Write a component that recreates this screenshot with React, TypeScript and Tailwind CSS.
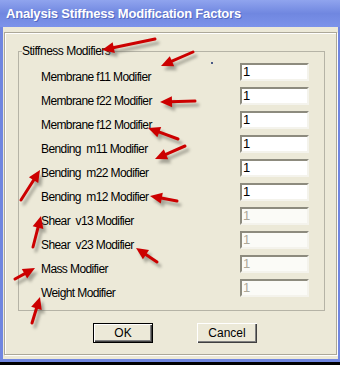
const rows = [
  { label: "Membrane f11 Modifier", enabled: true },
  { label: "Membrane f22 Modifier", enabled: true },
  { label: "Membrane f12 Modifier", enabled: true },
  { label: "Bending  m11 Modifier", enabled: true },
  { label: "Bending  m22 Modifier", enabled: true },
  { label: "Bending  m12 Modifier", enabled: true },
  { label: "Shear  v13 Modifier", enabled: false },
  { label: "Shear  v23 Modifier", enabled: false },
  { label: "Mass Modifier", enabled: false },
  { label: "Weight Modifier", enabled: false },
];

// red annotation arrows: tip first, then tail
const arrows: [number, number, number, number][] = [
  [102, 50, 155, 39],
  [161, 66, 193, 52],
  [160, 102, 195, 101],
  [148, 128, 178, 139],
  [155, 159, 185, 146],
  [40, 170, 21, 200],
  [150, 196, 177, 201],
  [41, 216, 33, 247],
  [136, 248, 157, 262],
  [35, 268, 15, 279],
  [40, 297, 32, 323],
];

function Arrow({ tip, tail, fill }: { tip: [number, number]; tail: [number, number]; fill: string }) {
  const [x1, y1] = tip;
  const [x2, y2] = tail;
  const len = Math.hypot(x2 - x1, y2 - y1);
  const ux = (x2 - x1) / len;
  const uy = (y2 - y1) / len;
  const head = 12;
  const half = 5.5;
  const bx = x1 + ux * head;
  const by = y1 + uy * head;
  const pts = `${x1},${y1} ${bx - uy * half},${by + ux * half} ${bx + uy * half},${by - ux * half}`;
  return (
    <g>
      <line x1={bx - ux * 2} y1={by - uy * 2} x2={x2} y2={y2} stroke={fill} strokeWidth={3} strokeLinecap="round" />
      <polygon points={pts} fill={fill} />
    </g>
  );
}

function Annotations() {
  return (
    <svg className="absolute inset-0 pointer-events-none" width={340} height={365} viewBox="0 0 340 365">
      <defs>
        <filter id="blur" x="-50%" y="-50%" width="200%" height="200%">
          <feGaussianBlur stdDeviation="1.6" />
        </filter>
      </defs>
      <g filter="url(#blur)" opacity={0.55} transform="translate(3 4)">
        {arrows.map(([a, b, c, d], i) => (
          <Arrow key={i} tip={[a, b]} tail={[c, d]} fill="#6b6a60" />
        ))}
      </g>
      {arrows.map(([a, b, c, d], i) => (
        <Arrow key={i} tip={[a, b]} tail={[c, d]} fill="#cc0000" />
      ))}
      <rect x={211} y={62} width={2} height={2} fill="#4a5a86" />
    </svg>
  );
}

export default function App() {
  return (
    <div className="relative w-[340px] h-[365px] bg-black font-['Liberation_Sans',Arial,sans-serif] overflow-hidden">
      <div className="h-[362px] flex flex-col bg-[#7086e0]">
        {/* Title bar */}
        <div className="h-[27px] flex items-center px-[6px] bg-gradient-to-b from-[#90a4ee] via-[#7087e0] to-[#7c93ea]">
          <span className="text-white font-bold text-[13px] tracking-[-0.2px] [text-shadow:1px_1px_0_#5468c0]">
            Analysis Stiffness Modification Factors
          </span>
        </div>

        {/* Window body */}
        <div className="flex-1 ml-[3px] mr-[2px] mb-[3px] bg-[#ECE9D8] pt-[5px] pl-[1px] pr-[1px] pb-[4px] flex">
          <div className="flex-1 flex flex-col border border-[#aca899] shadow-[inset_1px_1px_0_#fff,1px_1px_0_#fff]">
            <fieldset className="ml-[13px] mr-[11px] mt-[11px] border border-[#b5b3a6] pt-[5px] pb-[7px]">
              <legend className="ml-[3px] text-[12px] leading-[14px] tracking-[-0.5px] text-black">
                Stiffness Modifiers
              </legend>
              {rows.map((r) => (
                <div key={r.label} className="h-[24px] flex items-start justify-between pl-[22px] pr-[15px]">
                  <span className="pt-[7px] text-[12px] leading-[14px] tracking-[-0.6px] text-black whitespace-pre">
                    {r.label}
                  </span>
                  <div
                    className={`w-[69px] h-[18px] border-2 border-t-[#8d8b7e] border-l-[#8d8b7e] border-b-[#f4f3ec] border-r-[#f4f3ec] pl-[1px] text-[13px] leading-[14px] ${
                      r.enabled ? "bg-white text-black" : "bg-[#fbfbf7] text-[#aca899]"
                    }`}
                  >
                    1
                  </div>
                </div>
              ))}
            </fieldset>

            <div className="flex gap-[44px] pl-[88px] mt-[12px]">
              <button className="w-[60px] h-[20px] border border-black bg-[#ECE9D8] text-[12px] text-black shadow-[inset_1px_1px_0_#fff,inset_-1px_-1px_0_#404040,inset_-2px_-2px_0_#808080]">
                OK
              </button>
              <button className="w-[60px] h-[20px] bg-[#ECE9D8] text-[12px] text-black shadow-[inset_1px_1px_0_#fff,inset_-1px_-1px_0_#404040,inset_-2px_-2px_0_#808080]">
                Cancel
              </button>
            </div>
          </div>
        </div>
      </div>
      <Annotations />
    </div>
  );
}
